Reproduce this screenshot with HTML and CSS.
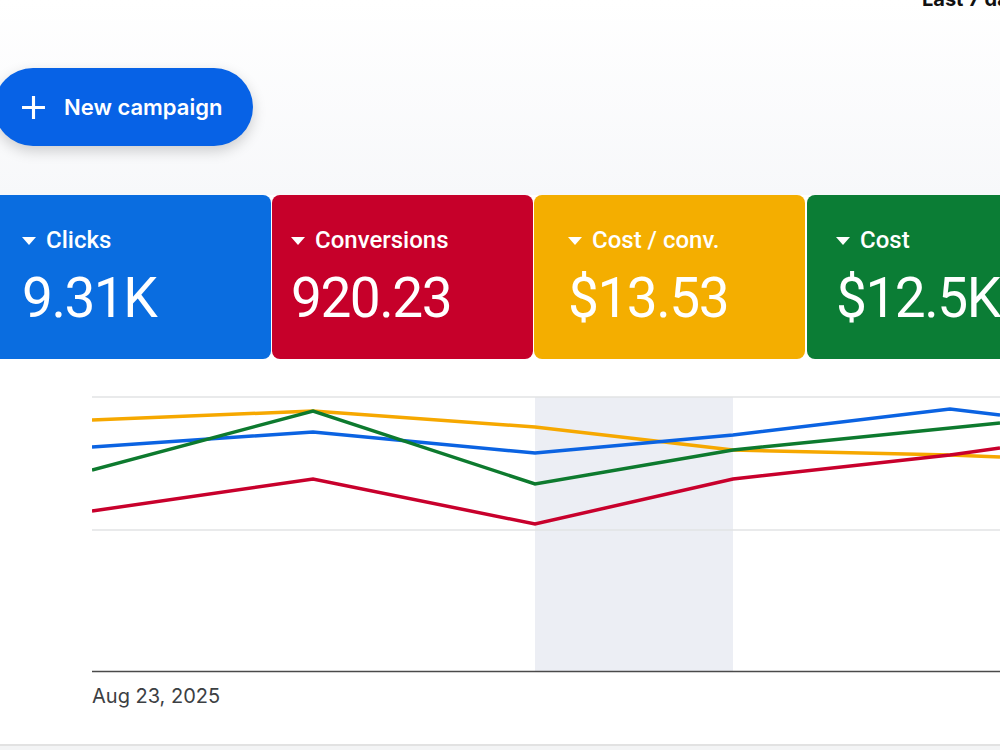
FILE: index.html
```html
<!DOCTYPE html>
<html lang="en">
<head>
    <meta charset="UTF-8">
    <title>Campaigns overview</title>
    <meta name="viewport" content="width=device-width, initial-scale=1.0">
    <link rel="stylesheet" href="styles.css">
</head>
<body>
<header class="top">
    <div class="range">Last 7 days</div>
    <button class="new-btn">
        <svg class="plus" viewBox="0 0 24 24" width="25" height="25">
            <path d="M12 1v22M1 12h22" stroke="#fff" stroke-width="3" fill="none"/>
        </svg>
        New campaign
    </button>
</header>

<main>
    <!-- Metric cards -->
    <div class="cards">
        <div class="card blue">
            <div class="label"><span class="caret"></span>Clicks</div>
            <div class="value">9.31K</div>
        </div>
        <div class="card red">
            <div class="label"><span class="caret"></span>Conversions</div>
            <div class="value">920.23</div>
        </div>
        <div class="card yellow">
            <div class="label"><span class="caret"></span>Cost / conv.</div>
            <div class="value">$13.53</div>
        </div>
        <div class="card green">
            <div class="label"><span class="caret"></span>Cost</div>
            <div class="value">$12.5K</div>
        </div>
    </div>

    <!-- Chart -->
    <div class="chart">
        <svg viewBox="0 0 908 300" width="908" height="300">
            <rect x="443" y="17" width="198" height="274" fill="#eceef4"/>
            <line x1="0" y1="17" x2="908" y2="17" stroke="#e2e3e5" stroke-width="1.5"/>
            <line x1="0" y1="150" x2="908" y2="150" stroke="#e2e3e5" stroke-width="1.5"/>
            <line x1="0" y1="291.5" x2="908" y2="291.5" stroke="#4a4a4a" stroke-width="1.5"/>
            <polyline points="0,40 221,31 443,47 641,70 858,75 908,77" stroke="#f6a800" stroke-width="3.5" fill="none"/>
            <polyline points="0,67 221,52 443,73 641,55 858,29 908,35" stroke="#0b63e2" stroke-width="3.5" fill="none"/>
            <polyline points="0,90 221,31 443,104 641,70 908,43" stroke="#0d7a2e" stroke-width="3.5" fill="none"/>
            <polyline points="0,131 221,99 443,144 641,99 858,75 908,68" stroke="#c8002c" stroke-width="3.5" fill="none"/>
        </svg>
        <div class="date">Aug 23, 2025</div>
    </div>
</main>

<footer class="bottom"></footer>
</body>
</html>
```

FILE: styles.css
```css
body {
    margin: 0;
    width: 1000px;
    height: 750px;
    overflow: hidden;
    font-family: "Roboto", "Liberation Sans", sans-serif;
    background: #fff;
}

.top {
    display: flow-root;
    height: 195px;
    background: linear-gradient(#ffffff, #f7f8fa);
}

.range {
    margin-top: -11px;
    margin-left: 922px;
    font-family: "Inter", sans-serif;
    font-weight: 700;
    font-size: 20px;
    line-height: 20px;
    color: #111;
    white-space: nowrap;
}

.new-btn {
    display: flex;
    align-items: center;
    gap: 18px;
    margin-top: 59px;
    margin-left: -6px;
    width: 259px;
    height: 78px;
    padding: 0 0 0 27px;
    border: none;
    border-radius: 39px;
    background: #0762e6;
    color: white;
    font-family: "Inter", sans-serif;
    font-weight: 600;
    font-size: 22px;
    box-shadow: 0 5px 14px rgba(0,0,0,0.18);
    cursor: pointer;
}

.cards {
    display: flex;
    gap: 1px;
    margin-left: -8px;
    height: 164px;
}

.card {
    flex: none;
    height: 164px;
    box-sizing: border-box;
    border-radius: 8px;
    padding-top: 31px;
    color: white;
}

.card.blue { width: 279px; background: #0a6de0; padding-left: 30px; }
.card.red { width: 261px; background: #c6002a; padding-left: 19px; }
.card.yellow { width: 271px; background: #f4ae00; padding-left: 34px; }
.card.green { width: 280px; background: #0b7d35; padding-left: 29px; margin-left: 1px; }

.label {
    display: flex;
    align-items: center;
    font-weight: 500;
    font-size: 24px;
    line-height: 28px;
}

.caret {
    width: 0;
    height: 0;
    border-left: 7.5px solid transparent;
    border-right: 7.5px solid transparent;
    border-top: 8px solid white;
    margin-right: 10px;
    margin-top: 2px;
}

.value {
    margin-top: 14px;
    font-size: 55px;
    line-height: 60px;
    letter-spacing: -1.5px;
}

.chart {
    padding: 21px 0 0 92px;
    height: 385px;
    box-sizing: border-box;
}

.chart svg {
    display: block;
}

.date {
    margin-top: 4px;
    font-family: "Inter", sans-serif;
    font-size: 20px;
    line-height: 24px;
    color: #3c4043;
}

.bottom {
    height: 10px;
    border-top: 2px solid #e2e2e2;
    background: #f3f4f5;
}
```
